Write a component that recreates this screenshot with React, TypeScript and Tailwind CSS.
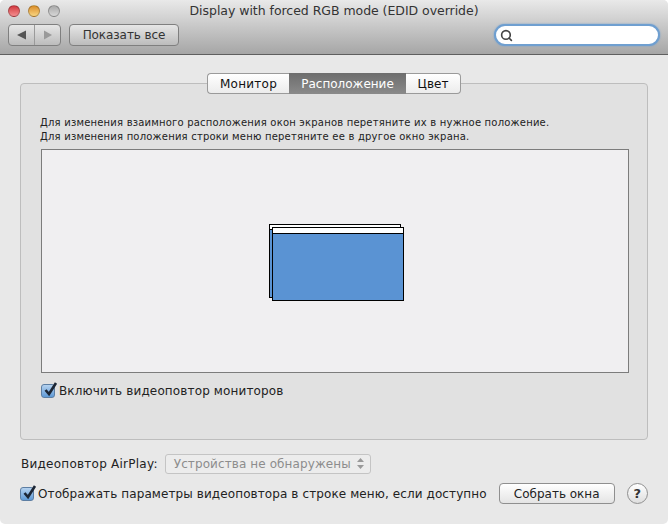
import { Search } from 'lucide-react';

const font = "font-['DejaVu_Sans',sans-serif]";

function Checkbox() {
  return (
    <span className="relative block h-[14px] w-[14px] shrink-0 rounded-[3px] border border-[#5d7ea3] bg-gradient-to-b from-[#b5d2ef] to-[#5f9ad6]">
      <svg className="absolute -top-[4px] left-[1px]" width="15" height="16" viewBox="0 0 15 16">
        <path d="M2.5 9 L6 13 L13 2" fill="none" stroke="#1c2635" strokeWidth="2.6" />
      </svg>
    </span>
  );
}

function Light({ color }: { color: string }) {
  return <span className={`block h-[12px] w-[12px] rounded-full border border-black/25 ${color}`} />;
}

export default function App() {
  return (
    <div className={`flex h-[524px] w-[668px] flex-col overflow-hidden rounded-[5px] bg-[#e8e8e8] ${font} text-[#1a1a1a]`}>
      <header className="h-[55px] shrink-0 border-b border-[#5f5f5f] bg-gradient-to-b from-[#e9e9e9] to-[#a6a6a6]">
        <div className="relative flex h-[23px] items-center justify-center">
          <div className="absolute left-[8px] top-[5px] flex gap-[8px]">
            <Light color="bg-gradient-to-b from-[#d0343d] to-[#f58d90]" />
            <Light color="bg-gradient-to-b from-[#d98c22] to-[#f9d680]" />
            <Light color="bg-gradient-to-b from-[#a9a9a9] to-[#d8d8d8]" />
          </div>
          <span className="text-[12.5px] tracking-[-0.04px] text-[#333]">Display with forced RGB mode (EDID override)</span>
        </div>
        <div className="mt-[1px] flex items-center pl-[8px] pr-[8px]">
          <div className="flex h-[22px] w-[53px] items-center rounded-[4px] border border-[#7f7f7f] bg-gradient-to-b from-[#e6e6e6] to-[#bcbcbc]">
            <div className="flex h-full flex-1 items-center justify-center border-r border-[#9a9a9a]">
              <svg width="10" height="10" viewBox="0 0 10 10"><path d="M0 5 L9 0.5 V9.5 Z" fill="#555" /></svg>
            </div>
            <div className="flex h-full flex-1 items-center justify-center">
              <svg width="10" height="10" viewBox="0 0 10 10"><path d="M9 5 L1 0.5 V9.5 Z" fill="#999" /></svg>
            </div>
          </div>
          <button className="ml-[8px] flex h-[22px] w-[110px] items-center justify-center rounded-[4px] border border-[#7f7f7f] bg-gradient-to-b from-[#e6e6e6] to-[#bcbcbc] text-[12px] tracking-[-0.08px] text-[#333]">
            Показать все
          </button>
          <div className="ml-auto flex h-[22px] w-[166px] items-center rounded-full border-[2px] border-[#6f9fd0] bg-white pl-[4px] shadow-[0_0_2px_#6f9fd0]">
            <Search className="h-[13px] w-[13px] text-[#444]" strokeWidth={3} />
          </div>
        </div>
      </header>

      <main className="flex flex-1 flex-col px-[20px]">
        <div className="relative z-10 mt-[18px] flex h-[21px] justify-center text-[12px]">
          <div className="flex w-[82px] items-center justify-center rounded-l-[4px] border border-r-0 border-[#9a9a9a] bg-gradient-to-b from-white to-[#ececec] tracking-[0.25px] text-[#111]">
            Монитор
          </div>
          <div className="flex w-[117px] items-center justify-center bg-gradient-to-b from-[#6d6d6d] to-[#8a8a8a] text-white">
            Расположение
          </div>
          <div className="flex w-[55px] items-center justify-center rounded-r-[4px] border border-l-0 border-[#9a9a9a] bg-gradient-to-b from-white to-[#ececec] text-[#111]">
            Цвет
          </div>
        </div>
        <section className="-mt-[11px] flex h-[357px] flex-col rounded-[4px] border border-[#bdbdbd] bg-[#e1e1e1] pl-[20px] pr-[18px] pt-[32px]">
          <p className="-ml-[1px] text-[10px] leading-[14px] tracking-[0.2px] text-[#222]">
            Для изменения взаимного расположения окон экранов перетяните их в нужное положение.
            <br />
            Для изменения положения строки меню перетяните ее в другое окно экрана.
          </p>
          <div className="mt-[5px] flex h-[224px] items-center justify-center border border-[#7c7c7c] bg-[#f0eff1]">
            <div className="relative ml-[3px] mt-[3px] h-[77px] w-[135px]">
              <div className="absolute left-0 top-0 h-[74px] w-[132px] border border-black bg-[#5a93d3]">
                <div className="h-[5px] border-b border-black bg-white" />
              </div>
              <div className="absolute bottom-0 right-0 h-[74px] w-[132px] border border-black bg-[#5a93d3]">
                <div className="h-[6px] border-b border-black bg-white" />
              </div>
            </div>
          </div>
          <label className="mt-[9px] flex items-center gap-[4px] text-[12px] tracking-[0.14px] text-[#222]">
            <Checkbox />
            Включить видеоповтор мониторов
          </label>
        </section>

        <div className="mt-[13px] flex h-[21px] items-center pl-[1px] text-[12px] tracking-[0.25px] text-[#222]">
          Видеоповтор AirPlay:
          <div className="ml-[7px] flex h-[20px] w-[206px] items-center justify-between rounded-[3px] border border-[#c4c4c4] bg-[#ececec] pl-[8px] pr-[6px] tracking-[0.1px] text-[#8d8d8d]">
            Устройства не обнаружены
            <svg width="7" height="11" viewBox="0 0 7 11"><path d="M3.5 0 L7 4 H0 Z M3.5 11 L7 7 H0 Z" fill="#999" /></svg>
          </div>
        </div>
        <div className="mt-[9px] flex h-[21px] items-center text-[12px] text-[#222]">
          <Checkbox />
          <span className="ml-[4px] tracking-[0.1px]">Отображать параметры видеоповтора в строке меню, если доступно</span>
          <button className="ml-[12px] flex h-[21px] w-[116px] shrink-0 items-center justify-center rounded-[4px] border border-[#8f8f8f] bg-gradient-to-b from-white to-[#e4e4e4] text-[#222]">
            Собрать окна
          </button>
          <div className="ml-[12px] flex h-[21px] w-[21px] shrink-0 items-center justify-center rounded-full border border-[#8f8f8f] bg-gradient-to-b from-white to-[#dedede] text-[13px] font-bold text-[#333]">
            ?
          </div>
        </div>
      </main>
    </div>
  );
}
